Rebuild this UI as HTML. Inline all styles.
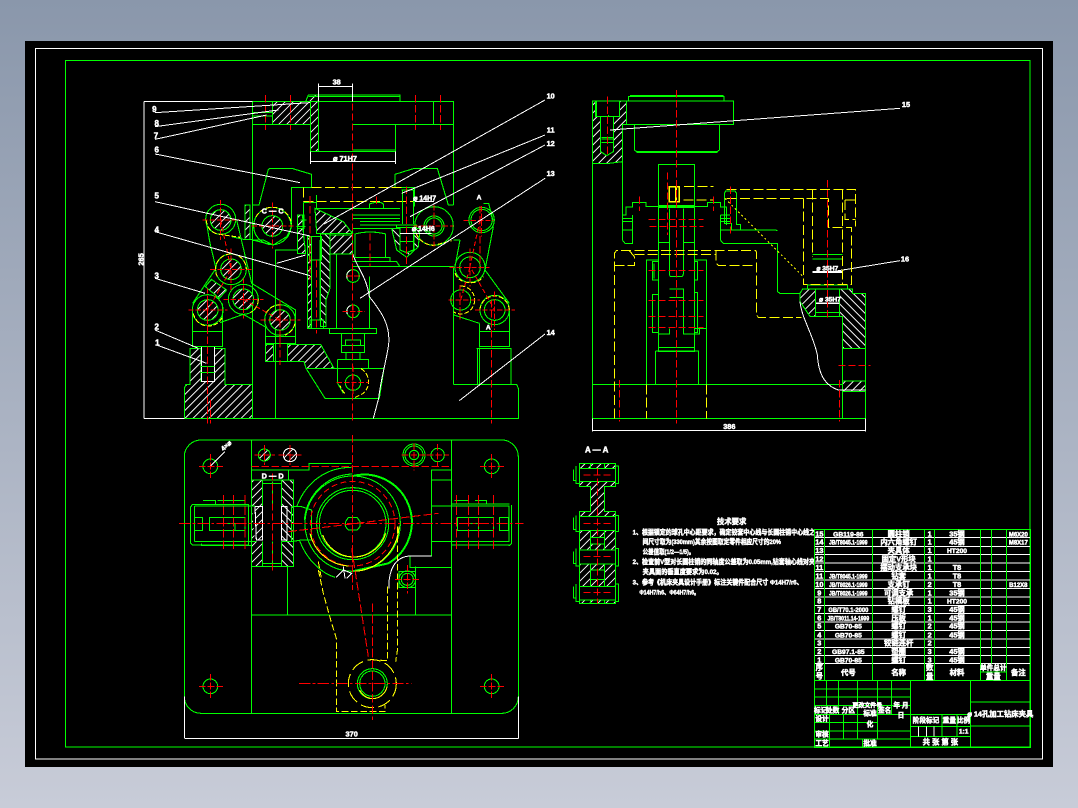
<!DOCTYPE html>
<html><head><meta charset="utf-8"><title>CAD</title>
<style>
html,body{margin:0;padding:0;width:1078px;height:808px;overflow:hidden;background:#000}
svg{display:block;shape-rendering:crispEdges}
.g{fill:none;stroke:#0f0;stroke-width:3.2}
.gt{fill:none;stroke:#0f0;stroke-width:5}
.w{fill:none;stroke:#fff;stroke-width:3}
.r{fill:none;stroke:#f00;stroke-width:3.2;stroke-dasharray:34 7 8 7}
.rd{fill:none;stroke:#f00;stroke-width:3.2;stroke-dasharray:22 8}
.y{fill:none;stroke:#ff0;stroke-width:3.2;stroke-dasharray:30 10}
.yd{fill:none;stroke:#ff0;stroke-width:3;stroke-dasharray:6 8}
.yt{fill:none;stroke:#ff0;stroke-width:5}
.h{fill:url(#h1);stroke:#0f0;stroke-width:3.2}
.i{fill:url(#h2);stroke:#0f0;stroke-width:3.2}
.b{fill:#000;stroke:#0f0;stroke-width:3.2}
text{fill:#fff;stroke:#fff;stroke-width:1.5;font-family:"Liberation Sans","Noto Sans CJK SC",sans-serif;font-weight:700;text-anchor:middle}
.l{text-anchor:start}
</style></head><body>
<svg width="1078" height="808" viewBox="0 0 1078 808" xmlns="http://www.w3.org/2000/svg">
<defs>
<linearGradient id="bg" x1="0" y1="0" x2="0" y2="1"><stop offset="0" stop-color="#8a97ab"/><stop offset="1" stop-color="#c8ccd8"/></linearGradient>
<pattern id="h1" width="17" height="17" patternUnits="userSpaceOnUse" patternTransform="rotate(45)"><rect width="17" height="17" fill="#000"/><rect x="0" y="0" width="3" height="17" fill="#fff"/></pattern>
<pattern id="h2" width="17" height="17" patternUnits="userSpaceOnUse" patternTransform="rotate(-45)"><rect width="17" height="17" fill="#000"/><rect x="0" y="0" width="3" height="17" fill="#fff"/></pattern>
</defs>
<rect width="1078" height="808" fill="url(#bg)"/>
<rect x="25" y="41" width="1028" height="726" fill="#000"/>
<rect x="35.5" y="48.5" width="1007" height="710.5" fill="none" stroke="#fff"/>
<rect x="65.5" y="60.5" width="964.5" height="686.5" fill="none" stroke="#0f0"/>

<!-- MAIN VIEW -->
<g transform="translate(130 80) scale(.33333)">
<path class="h" d="M427 65H542V133H427Z"/>
<path class="h" d="M527 65L535 45H565V215H542V65Z"/>
<path class="g" d="M367 1015V65H970V375M367 133H540M367 98H427M367 108H427M668 133H970M910 65V133M797 133V215M565 65V215H797M668 210H795M535 45H810V65M535 49H808M565 65H970"/>
<!-- clamps -->
<path class="g" d="M367 375H387L415 268L420 265H485L545 283V323H485V440M970 375H955L922 265H853L795 283V323H853V380M367 480H400L430 495L470 470L485 440M437 1015V510H527"/>
<path class="y" d="M520 323V365M545 323H817V365M520 365H850"/>
<path class="g" d="M520 368H560V385H810M668 405H810M668 415H810M690 425H810M690 435H800M668 445H805M718 385V372L735 367H752L760 372V385M815 330H850V432M817 330V432M800 435H860V443H800ZM810 460H850M812 485H850M810 510L830 518L850 510V455M810 510V455"/>
<path class="i" d="M785 445L800 510L830 532L865 500L870 445H852V510L830 518L810 510V445Z"/>
<path class="g" d="M675 532V462Q720 450 767 462V532M675 532H780V545H668M780 545H800L810 560H970M668 560H810M668 445V525M970 560V913"/>
<path class="h" d="M555 385L640 425L667 460H560Z"/>
<path class="h" d="M595 465H668V522H595Z"/>
<path class="g" d="M520 368V462M560 345V385M619 522V745M595 522H668M532 745H598M598 745H740V761H598ZM718 745V590"/>
<path class="h" d="M502 405H518L520 460L527 520H502Z"/>
<path class="h" d="M532 470H545V745H532Z"/>
<path class="i" d="M572 462H600V625L588 660V740H572Z"/>
<path class="g" d="M545 480V720M570 480V720M540 720H580V745H540ZM545 540H570M502 405H522V445H502ZM512 420H530M500 440H527M538 470H575V540H538Z"/>
<path class="g" d="M634 761V818H704V761M634 797H704M646 780H692V797H646ZM648 818V838M690 818V838M623 838H716V865M623 838V910L640 940M528 865H762M528 865L585 955H748M762 865L748 955"/>
<path class="h" d="M407 793H430V845H407Z"/>
<path class="h" d="M473 793H572L612 865H528L522 845H473Z"/>
<path class="g" d="M407 740V790H497V740M407 770H497M430 793V845H473M437 845V1015"/>
<circle class="g" cx="669" cy="908" r="23"/>
<path class="y" style="stroke-dasharray:14 6" d="M693 866A46 46 0 0 1 700 940L672 954M645 940A46 46 0 0 1 630 916"/>
<circle class="g" cx="669" cy="588" r="19"/><circle class="g" cx="669" cy="694" r="19"/>
<path class="w" d="M652 596A19 19 0 0 1 661 571M652 702A19 19 0 0 1 661 677"/>
<!-- base -->
<path class="h" d="M163 1015V925L168 913H180V805H213V905H253V805H285V913H367V1015Z"/>
<path class="b" d="M215 800H253V905H215Z" style="stroke:#fff"/>
<path class="g" d="M213 860H253M213 878H253M163 1015H1165V925L1160 913H1143V805H1043V913M970 913H1160M187 690V800H277V670M187 755H277M1048 730V800H1138V690M1048 755H1138M1048 802V913M1040 805H1143"/>
<!-- left links -->
<path class="g" d="M228 420L240 490L258 565L188 670M320 420L365 610L497 690V740M340 703L405 740M270 728L340 703M305 470L340 478H367M367 480L430 495"/>
<path class="h" d="M226 620L244 598L290 630L268 655Z"/>
<path class="h" d="M345 375H360V478H345Z"/>
<circle class="g" cx="272" cy="418" r="45"/><circle class="h" cx="272" cy="420" r="31"/>
<circle class="g" cx="427" cy="438" r="56"/><circle class="h" cx="427" cy="438" r="31"/>
<circle class="g" cx="303" cy="568" r="46"/><circle class="h" cx="303" cy="568" r="31"/>
<circle class="g" cx="340" cy="658" r="45"/><circle class="h" cx="340" cy="658" r="31"/>
<circle class="g" cx="233" cy="690" r="46"/><circle class="h" cx="233" cy="690" r="31"/>
<circle class="g" cx="450" cy="720" r="46"/><circle class="h" cx="450" cy="720" r="31"/>
<path class="y" style="stroke-dasharray:14 6" d="M229 420A45 45 0 0 0 262 462L330 472M378 410A56 56 0 0 1 427 382A56 56 0 0 1 484 430M262 590A46 46 0 0 1 303 522A46 46 0 0 1 349 568M385 658A45 45 0 0 1 361 698M190 700A46 46 0 0 0 233 738A46 46 0 0 0 278 710M408 700A46 46 0 0 1 450 675M495 730A46 46 0 0 1 465 765"/>
<!-- right links -->
<path class="g" d="M990 480L975 560M1090 440L1065 570L1138 670M970 480H990M972 705L1048 730M1090 425L1076 370H1060"/>
<circle class="g" cx="912" cy="438" r="58"/><circle class="g" cx="912" cy="438" r="30"/><circle class="g" cx="912" cy="438" r="24"/>
<path class="y" style="stroke-dasharray:14 6" d="M858 460A58 58 0 0 0 912 496L965 482"/>
<circle class="g" cx="1055" cy="420" r="38"/><circle class="g" cx="1055" cy="420" r="32"/>
<circle class="g" cx="1020" cy="562" r="45"/><circle class="g" cx="1020" cy="562" r="31"/>
<circle class="g" cx="992" cy="660" r="30"/>
<circle class="g" cx="1094" cy="690" r="44"/><circle class="g" cx="1094" cy="690" r="31"/>
<path class="y" style="stroke-dasharray:14 6" d="M975 580A45 45 0 0 0 1020 608A45 45 0 0 0 1060 590M992 618A42 42 0 0 1 1034 660M1034 660A42 42 0 0 1 992 702A42 42 0 0 1 970 695M1050 690A44 44 0 0 1 1094 648A44 44 0 0 1 1138 690"/>
<!-- break line -->
<path class="w" d="M668 522C680 560 710 590 718 650C750 690 785 735 775 800C765 860 752 900 746 955L730 1015"/>
<!-- red -->
<path class="rd" d="M667 10V1030M407 45V150M481 45V150M856 45V150M931 45V150M540 348V600M560 540V760M740 350V380M720 460V560M830 320V560M232 650V1030M450 660V855M241 960V1030M1084 660V1030M1050 378V560"/>
<path class="r" style="stroke-dasharray:16 6" d="M272 360V480M217 420H330M427 368V505M365 438H490M303 505V630M240 568H365M340 595V715M280 658H400M233 625V750M175 690H292M450 660V780M392 720H512M912 375V500M850 438H970M1055 378V470M1000 422H1090M1020 505V620M958 562H1078M990 615V725M955 660H1050M1094 635V750M1035 690H1155M668 565V610M650 588H690M669 675V715M638 694H705M620 908H716M669 860V950"/>
<path class="rd" style="stroke-dasharray:14 8" d="M272 420L303 568L233 690M340 658L450 720M1050 420L1020 560L1094 690M992 660L1020 562"/>
<!-- dims & leaders -->
<path class="w" d="M42 65V1015M42 65H367M42 1015H163M565 10V65M667 10V65M565 20H667M541 215V252M797 215V252M541 245H797M75 98L540 68M75 140L445 90M75 178L410 105M75 222L510 308M75 365L540 468M75 455L540 587M75 595L225 640M75 750L205 805M80 795L230 850M1245 60L582 432M1245 165L815 340M1245 195L840 410M1245 295L690 655M1245 762L988 962M527 525L440 550M810 460H905M855 365H912"/>
<text x="73" y="96" font-size="24">9</text><text x="80" y="138" font-size="24">8</text><text x="78" y="176" font-size="24">7</text><text x="80" y="218" font-size="24">6</text><text x="80" y="355" font-size="24">5</text><text x="80" y="458" font-size="24">4</text><text x="80" y="595" font-size="24">3</text><text x="80" y="748" font-size="24">2</text><text x="82" y="796" font-size="24">1</text>
<text x="1262" y="56" font-size="22">10</text><text x="1262" y="158" font-size="22">11</text><text x="1262" y="198" font-size="22">12</text><text x="1262" y="288" font-size="22">13</text><text x="1262" y="765" font-size="22">14</text>
<text x="620" y="14" font-size="22">38</text><text x="645" y="243" font-size="22">⌀ 71H7</text><text x="884" y="362" font-size="21">⌀ 14H7</text><text x="880" y="453" font-size="21">⌀ 14H6</text>
<text x="428" y="400" font-size="22">C — C</text><text x="1047" y="358" font-size="20">A</text><text x="1075" y="748" font-size="20">A</text>
<text transform="translate(40 538) rotate(-90)" font-size="22">265</text>
</g>

<!-- SIDE VIEW -->
<g transform="translate(580 85) scale(.33333)">
<path class="h" d="M37 48H50V95H62V200L80 212L100 200V95H118V48H140V119H128V230L80 236L37 235Z"/>
<path class="g" d="M37 1000V48H140M37 1000H857V625M37 898H857M145 48V35H432V48M150 31H430M140 48H461V119H140ZM163 119V195L170 200H412L418 195V119M170 203H412M128 119V390"/>
<path class="g" d="M47 48H118V95H47ZM62 95V200L80 212L100 200V95M65 157H100M65 162H100M65 172H100M85 90V95"/>
<path class="g" d="M235 238H343V800H235ZM268 370V565Q268 575 275 575H303Q310 575 310 565V370M235 362H343M235 368H343M235 472H268M310 472H343M268 612H310V730M268 637H310M268 730V747H235M310 730V747H358V730M235 787H343M226 798H356V898M226 798V898"/>
<path class="g" d="M128 390H138V366H157V353H198V364H382V353H422V366H440V420M127 390V465L135 475H157V390M128 400H157M128 410H157M128 435H157M421 390V465L430 475H592V620L600 625H660M421 390H450M421 400H450M421 410H450M421 435H482M592 437L586 435H482V418H470V325L465 318H437L433 325V415H455V435"/>
<path class="g" d="M199 898V525H235M343 525H380V898M343 730H380M217 530H235V585H217ZM217 628H235V742H217ZM222 535V580M343 530H353V585H343ZM343 622H353V742H343Z"/>
<path class="h" d="M668 612H706V694H690L660 650V625Z"/>
<path class="i" d="M779 612H818V625H857V790H787V694H779Z"/>
<path class="h" d="M787 888H857V920H787Z"/>
<path class="g" d="M668 612H818M706 612V694H779V612M706 682H779M683 600V612M802 600V612M683 600H802M787 694V1000M697 522H787M697 508H787"/>
<path class="w" d="M660 650C665 700 700 750 712 810C715 860 730 900 775 915H857M37 1000V1040M857 1000V1040M37 1036H857M90 135L960 70M770 558L960 527"/>
<path class="yt" d="M698 561H787M708 655H778" style="stroke:#fff"/>
<path class="y" d="M103 1000V505L110 496H527L530 503V690L535 697H665M103 541H163V515L148 497M408 497V535L415 541H527M163 508H410M312 305H400M440 313H826V425M697 313V515M787 313V600M670 340V598H815V428H745V340M310 345H400M440 340H745M795 345H826M795 345V403H826M199 898V1000M379 898V1000"/>
<path class="yt" d="M268 305H298V350H268ZM288 305V350"/>
<path class="yd" d="M435 340L670 575"/>
<path class="rd" d="M289 15V1015M82 35V210M262 262V450M451 305V445M742 285V705M178 335V378M400 335V378M118 885V1010M778 885V1010M205 403H370M208 424H370M205 556H370M205 646H370M205 694H370M205 727H370M775 841H872"/>
<text x="448" y="1032" font-size="22">386</text>
<text x="742" y="556" font-size="20">⌀ 35H7</text><text x="750" y="650" font-size="20">⌀ 35H7</text>
<text x="978" y="66" font-size="22">15</text><text x="975" y="530" font-size="22">16</text>
</g>

<!-- PLAN VIEW -->
<g transform="translate(175 430) scale(.33333)">
<rect class="g" x="28" y="30" width="1002" height="820" rx="50"/>
<path class="g" d="M230 30V850M830 30V850M230 555H830M230 120H402V100H530M340 120V150M338 410V555M722 410V555M705 378V412H830M770 120H830V150H770ZM770 120V378H705M770 228H1002V335H770"/>
<path class="h" d="M230 150H263V410H230Z"/>
<path class="i" d="M320 150H356V410H320Z"/>
<path class="g" d="M263 150H320V410H263ZM263 160H320M263 400H320M293 155V400"/>
<path class="b" d="M230 228H320V335H240Z" style="stroke:none"/>
<path class="h" d="M240 230H263V330H244Z" style="stroke:#fff"/>
<path class="i" d="M320 230H336V330H320Z" style="stroke:#fff"/>
<path class="g" d="M58 228H240M58 335H245M58 228V335M58 262H83V302H58ZM103 262H210V302H103ZM145 280H180V302M46 232L52 224H220V345H52L46 338ZM84 212H122V222M128 212H210V222M80 340V346H230"/>
<path class="g" d="M830 222H1003M830 345H1003M847 262H955V302H847ZM973 262H1000V302H973ZM1010 225V340L1003 347H1000M838 212H880V222M900 212H935V222M880 280H910V302"/>
<path class="g" d="M350 230H380L410 240V330L378 330L350 335H320M350 230V335"/>
<circle class="g" cx="533" cy="281" r="108"/><circle class="g" cx="533" cy="281" r="100"/><circle class="g" cx="533" cy="281" r="143"/>
<path style="fill:none;stroke:#0f0;stroke-width:6" d="M533 138A143 143 0 0 1 640 400L533 424"/>
<path class="g" d="M365 230C395 150 460 112 530 112M373 330C395 390 440 430 480 442M533 132A150 150 0 0 0 388 270"/>
<circle class="rd" style="stroke-dasharray:18 10" cx="533" cy="281" r="127"/>
<path class="g" d="M520 262H546L555 275V290L546 300H520L512 290V275Z"/>
<path class="yt" style="stroke-width:3.2" d="M443 315A100 100 0 0 0 533 381A100 100 0 0 0 632 310M405 310A127 127 0 0 0 520 408M672 290A143 143 0 0 1 540 424"/>
<path class="y" style="stroke-dasharray:20 8" d="M430 420L445 490L470 580L484 625V845H630V825M668 290V655L662 695M638 470V692L605 690M430 395L440 450"/>
<path class="w" d="M642 475C640 420 660 380 705 378H770M483 442L505 420L530 430L515 445M505 410L510 445"/>
<circle class="g" cx="592" cy="761" r="45"/><circle class="g" cx="592" cy="761" r="38"/>
<path class="yt" style="stroke-width:3.2" d="M554 780A45 45 0 0 0 592 806A45 45 0 0 0 636 770"/>
<circle class="y" style="stroke-dasharray:40 14" cx="592" cy="761" r="72"/>
<circle class="g" cx="106" cy="109" r="22"/><circle class="g" cx="950" cy="109" r="22"/><circle class="g" cx="106" cy="769" r="22"/><circle class="g" cx="950" cy="769" r="22"/>
<circle class="h" cx="268" cy="75" r="18"/><circle class="h" cx="345" cy="75" r="20" style="stroke:#fff"/>
<circle class="g" cx="717" cy="75" r="33"/><circle class="g" cx="717" cy="75" r="27"/><circle class="g" cx="717" cy="75" r="14"/><circle class="g" cx="788" cy="75" r="20"/>
<path class="g" d="M672 425H722V472H672Z"/><circle class="g" cx="697" cy="448" r="25"/><circle class="g" cx="697" cy="448" r="18"/>
<path class="rd" d="M533 15V480M292 130V430M230 109H830"/>
<path class="r" d="M12 280H1045M372 760H710"/>
<path class="rd" style="stroke-dasharray:26 8" d="M340 305L790 250M530 355L580 680M592 520V870M145 195V360M175 195V360M210 195V360M880 195V360M910 195V360M845 195V360M955 195V360"/>
<path class="r" style="stroke-dasharray:20 6" d="M72 109H145M106 72V146M915 109H988M950 72V146M72 769H145M106 732V806M915 769H988M950 732V806M238 75H300M268 45V105M310 75H380M345 45V105M680 75H752M717 40V122M755 75H822M788 42V108M660 448H738M697 405V490"/>
<path class="w" d="M28 800V925M1030 800V925M30 925H1030M107 108L150 65"/>
<text x="293" y="146" font-size="22">D — D</text><text x="530" y="920" font-size="22">370</text><text transform="translate(158 52) rotate(-42)" font-size="20">4×⌀</text>
</g>

<!-- SECTION A-A + NOTES -->
<g transform="translate(560 440) scale(.33333)">
<text x="110" y="38" font-size="24">A — A</text>
<path class="h" d="M58 70H167V140H134V215H167V490H58V215H92V140H58Z"/>
<path class="b" d="M92 292H134V312H92ZM92 390H134V418H92Z"/>
<path class="b" d="M58 85H167V125H58ZM58 230H167V272H58ZM58 330H167V372H58ZM58 440H167V480H58Z"/>
<path class="g" d="M167 78H176V130H167M167 226H176V275H167M167 325H176V378H167M167 432H176V484H167M48 78V130H58M48 226V275H58M48 325V378H58M48 432V484H58M40 88V122H48M40 232V268H48M40 334V370H48M40 440V474H48M92 70V85M134 70V85M92 272V330M134 272V330M92 372V440M134 372V440M92 480V490M134 480V490M58 70H167M58 490H167"/>
<path class="rd" d="M70 105H160M70 250H160M70 350H160M70 458H160M113 85V490"/>
<g font-size="20">
<text x="515" y="252" font-size="22">技术要求</text>
<text class="l" x="218" y="284" textLength="547" lengthAdjust="spacingAndGlyphs">1、根据锁定的球孔中心距要求，确定铰套中心线与长圆柱销中心线之</text>
<text class="l" x="248" y="312" textLength="415" lengthAdjust="spacingAndGlyphs">间尺寸取为(330mm)其余按图取定零件相应尺寸的20%</text>
<text class="l" x="248" y="342" textLength="155" lengthAdjust="spacingAndGlyphs">公差值取(1/2—1/5)。</text>
<text class="l" x="218" y="372" textLength="547" lengthAdjust="spacingAndGlyphs">2、检查前V型对长圆柱销的同轴度公差取为0.05mm,钻套轴心线对夹</text>
<text class="l" x="248" y="402" textLength="240" lengthAdjust="spacingAndGlyphs">夹具面的垂直度要求为0.02。</text>
<text class="l" x="218" y="434" textLength="510" lengthAdjust="spacingAndGlyphs">3、参考《机床夹具设计手册》标注关键件配合尺寸 Φ14H7/r6、</text>
<text class="l" x="238" y="464" textLength="180" lengthAdjust="spacingAndGlyphs">Φ14H7/h6、Φ64H7/h6。</text>
</g>
</g>

<!-- TABLE -->
<g transform="translate(810 525) scale(.33333)">
<path class="w" style="stroke-width:3" d="M13 38H661M13 64H661M13 89H661M13 114H661M13 140H661M13 165H661M13 190H661M13 216H661M13 241H661M13 266H661M13 291H661M13 316H661M13 342H661M13 367H661M13 392H661M13 416H661"/>
<path class="g" d="M13 13H661V667H13ZM44 13V466M187 13V466M344 13V466M373 13V466M511 13V466M545 13V416M590 13V466M511 441H590M13 466H661"/>
<path class="g" d="M49 466V568M85 466V568M143 466V568M203 466V642M245 466V568M302 466V667M13 492H302M13 516H302M13 541H302M13 568H302M13 593H203M13 618H302M13 642H302M58 568V667M100 568V642M143 568V642M158 642V667M203 642H302M481 466V667M481 531H661M481 603H661M302 568H481M302 604H481M302 634H481M396 568V634M441 568V634"/>
<path class="w" d="M325 604V634M349 604V634M372 604V634"/>
<g font-size="22">
<text x="28" y="34">15</text><text x="115" y="34" font-size="20">GB119-86</text><text x="266" y="34">圆柱销</text><text x="359" y="34">1</text><text x="441" y="34">35钢</text><text x="625" y="34" font-size="18">M6X20</text>
<text x="28" y="59">14</text><text x="115" y="59" font-size="18" textLength="115" lengthAdjust="spacingAndGlyphs">JB/T8045.1-1999</text><text x="266" y="59">内六角螺钉</text><text x="359" y="59">1</text><text x="441" y="59">45钢</text><text x="625" y="59" font-size="18">M8X17</text>
<text x="28" y="84">13</text><text x="266" y="84">夹具体</text><text x="359" y="84">1</text><text x="441" y="84" font-size="20">HT200</text>
<text x="28" y="110">12</text><text x="266" y="110">固定V形块</text><text x="359" y="110">1</text>
<text x="28" y="135">11</text><text x="266" y="135">摆动支承块</text><text x="359" y="135">1</text><text x="441" y="135">T8</text>
<text x="28" y="160">11</text><text x="115" y="160" font-size="18" textLength="115" lengthAdjust="spacingAndGlyphs">JB/T8045.1-1999</text><text x="266" y="160">钻套</text><text x="359" y="160">1</text><text x="441" y="160">T8</text>
<text x="28" y="186">10</text><text x="115" y="186" font-size="18" textLength="115" lengthAdjust="spacingAndGlyphs">JB/T8026.1-1999</text><text x="266" y="186">支承钉</text><text x="359" y="186">2</text><text x="441" y="186">T8</text><text x="625" y="186" font-size="18">B12X8</text>
<text x="28" y="211">9</text><text x="115" y="211" font-size="18" textLength="115" lengthAdjust="spacingAndGlyphs">JB/T8026.1-1999</text><text x="266" y="211">可调支承</text><text x="359" y="211">1</text><text x="441" y="211">35钢</text>
<text x="28" y="236">8</text><text x="266" y="236">钻模板</text><text x="359" y="236">1</text><text x="441" y="236" font-size="20">HT200</text>
<text x="28" y="261">7</text><text x="115" y="261" font-size="18" textLength="120" lengthAdjust="spacingAndGlyphs">GB/T70.1-2000</text><text x="266" y="261">螺钉</text><text x="359" y="261">3</text><text x="441" y="261">45钢</text>
<text x="28" y="286">6</text><text x="115" y="286" font-size="18" textLength="125" lengthAdjust="spacingAndGlyphs">JB/T8011.14-1999</text><text x="266" y="286">压板</text><text x="359" y="286">1</text><text x="441" y="286">45钢</text>
<text x="28" y="311">5</text><text x="115" y="311" font-size="20">GB70-85</text><text x="266" y="311">螺钉</text><text x="359" y="311">2</text><text x="441" y="311">45钢</text>
<text x="28" y="337">4</text><text x="115" y="337" font-size="20">GB70-85</text><text x="266" y="337">螺钉</text><text x="359" y="337">2</text><text x="441" y="337">45钢</text>
<text x="28" y="362">3</text><text x="266" y="362">铰链连杆</text><text x="359" y="362">2</text>
<text x="28" y="387">2</text><text x="115" y="387" font-size="20">GB97.1-85</text><text x="266" y="387">垫圈</text><text x="359" y="387">3</text><text x="441" y="387">45钢</text>
<text x="28" y="412">1</text><text x="115" y="412" font-size="20">GB70-85</text><text x="266" y="412">螺钉</text><text x="359" y="412">3</text><text x="441" y="412">45钢</text>
<text x="28" y="435">序</text><text x="28" y="460">号</text><text x="115" y="450">代号</text><text x="266" y="450">名称</text><text x="359" y="435">数</text><text x="359" y="462">量</text><text x="441" y="450">材料</text><text x="550" y="435" font-size="20">单件总计</text><text x="550" y="462">重量</text><text x="625" y="450">备注</text>
<text x="32" y="562" font-size="20">标记</text><text x="68" y="562" font-size="20">处数</text><text x="115" y="562" font-size="20">分区</text><text x="172" y="547" font-size="18">更改文件号</text><text x="224" y="562" font-size="20">签名</text><text x="273" y="548" font-size="20">年 月</text><text x="273" y="578" font-size="20">日</text>
<text x="36" y="588" font-size="20">设计</text><text x="180" y="572" font-size="20">标准</text><text x="180" y="605" font-size="20">化</text><text x="36" y="634" font-size="20">审核</text><text x="36" y="662" font-size="20">工艺</text><text x="180" y="662" font-size="20">批准</text>
<text x="348" y="592" font-size="20">阶段标记</text><text x="418" y="592" font-size="20">重量</text><text x="461" y="592" font-size="20">比例</text><text x="461" y="626" font-size="20">1:1</text><text x="391" y="658" font-size="22">共 张 第 张</text>
<text x="571" y="574" font-size="22">⌀ 14孔加工钻床夹具</text>
</g>
</g>
</svg>
</body></html>
